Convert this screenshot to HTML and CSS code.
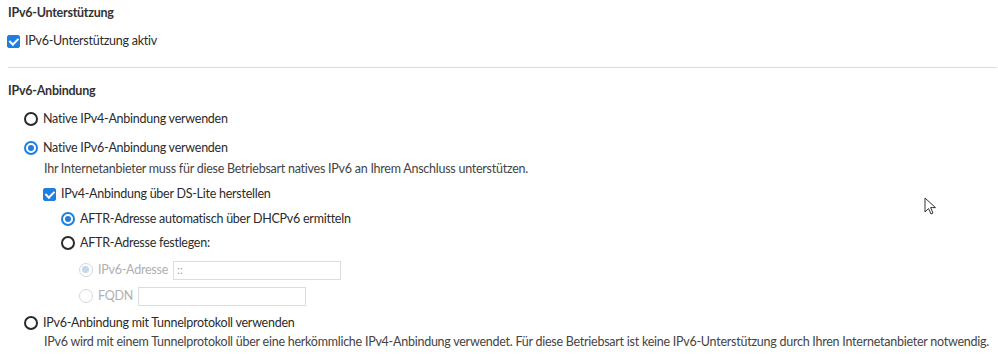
FILE: index.html
```html
<!DOCTYPE html>
<html lang="de">
<head>
<meta charset="utf-8">
<link rel="stylesheet" href="styles.css">
</head>
<body>
<section class="group">
  <h2 class="head h-first">IPv6-Unterstützung</h2>
  <label class="opt m8"><input type="checkbox" class="cb" checked><span>IPv6-Unterstützung aktiv</span></label>
</section>
<hr class="sep">
<section class="group">
  <h2 class="head">IPv6-Anbindung</h2>
  <div class="list">
    <label class="opt rad m8"><input type="radio" name="a"><span>Native IPv4-Anbindung verwenden</span></label>
    <label class="opt rad m9"><input type="radio" name="a" checked><span>Native IPv6-Anbindung verwenden</span></label>
    <div class="sub">
      <p class="desc m2">Ihr Internetanbieter muss für diese Betriebsart natives IPv6 an Ihrem Anschluss unterstützen.</p>
      <label class="opt m6"><input type="checkbox" class="cb" checked><span>IPv4-Anbindung über DS-Lite herstellen</span></label>
      <div class="sub2">
        <label class="opt rad m5"><input type="radio" name="b" checked><span>AFTR-Adresse automatisch über DHCPv6 ermitteln</span></label>
        <label class="opt rad m4"><input type="radio" name="b"><span>AFTR-Adresse festlegen:</span></label>
        <div class="sub3">
          <div class="opt rad dis m7"><input type="radio" name="c" checked disabled><span>IPv6-Adresse</span><input type="text" class="field" value="::" disabled></div>
          <div class="opt rad dis m6"><input type="radio" name="c" disabled><span>FQDN</span><input type="text" class="field" disabled></div>
        </div>
      </div>
    </div>
    <label class="opt rad m7"><input type="radio" name="a"><span>IPv6-Anbindung mit Tunnelprotokoll verwenden</span></label>
    <div class="sub">
      <p class="desc m0">IPv6 wird mit einem Tunnelprotokoll über eine herkömmliche IPv4-Anbindung verwendet. Für diese Betriebsart ist keine IPv6-Unterstützung durch Ihren Internetanbieter notwendig.</p>
    </div>
  </div>
</section>
<svg class="cursor" width="14" height="20" viewBox="0 0 14 20"><path d="M1 1 L1 15 L4.5 11.5 L7 17 L9 16 L6.6 10.6 L11.5 10.6 Z" fill="#fff" stroke="#333" stroke-width="1" stroke-linejoin="round"/></svg>
</body>
</html>
```

FILE: styles.css
```css
html, body {
  margin: 0;
  background: #fff;
}
body {
  padding: 0 1px 0 8px;
  font-family: Lato, "Noto Sans", sans-serif;
  font-size: 12.5px;
  letter-spacing: -0.25px;
  color: #2b2b2b;
  position: relative;
  height: 358px;
  overflow: hidden;
}
.head {
  margin: 0;
  font-size: 12.5px;
  font-weight: 700;
  line-height: 20px;
  color: #333;
}
.h-first { padding-top: 3px; }
.sep {
  margin: 16px 0 0 0;
  border: 0;
  border-top: 1px solid #dcdcdc;
  height: 0;
}
.group + .sep + .group .head { margin-top: 13px; }
.opt {
  display: flex;
  align-items: center;
  height: 20px;
  line-height: 20px;
  gap: 5px;
  margin-left: -1px;
}
.opt.rad { gap: 5px; }
.opt input[type=checkbox], .opt input[type=radio] {
  -webkit-appearance: none;
  appearance: none;
  margin: 0;
  flex: none;
  box-sizing: border-box;
  position: relative;
}
.opt input[type=checkbox] {
  width: 13px;
  height: 13px;
  border-radius: 2px;
  border: 1.5px solid #555;
  background: #fff;
}
.opt input[type=checkbox]:checked {
  background: #1f7fe0;
  border-color: #1f7fe0;
}
.opt input[type=checkbox]:checked::after {
  content: "";
  position: absolute;
  left: 3.2px;
  top: 0.2px;
  width: 3.5px;
  height: 7px;
  border: solid #fff;
  border-width: 0 2px 2px 0;
  transform: rotate(45deg);
}
.opt input[type=radio] {
  width: 14px;
  height: 14px;
  border-radius: 50%;
  border: 2px solid #2a2a2a;
  background: #fff;
}
.opt input[type=radio]:checked {
  border-color: #1f7fe0;
}
.opt input[type=radio]:checked::after {
  content: "";
  position: absolute;
  left: 2px;
  top: 2px;
  width: 6px;
  height: 6px;
  border-radius: 50%;
  background: #1f7fe0;
}
.opt input[type=radio]:disabled {
  border: 1.5px solid #d6d6d6;
}
.opt input[type=radio]:disabled:checked::after {
  left: 2.25px;
  top: 2.25px;
  width: 6.5px;
  height: 6.5px;
  background: #c4d9ef;
}
.list { padding-left: 17px; }
.sub { padding-left: 19px; }
.sub2 { padding-left: 18px; }
.sub3 { padding-left: 18px; }
.desc {
  margin: 0;
  line-height: 18px;
  color: #444;
}
.dis { color: #b0b0b0; }
.field {
  margin-left: 0;
  width: 168px;
  height: 19px;
  box-sizing: border-box;
  border: 1px solid #ddd;
  background: #fff;
  font: inherit;
  font-size: 12px;
  color: #aaa;
  padding: 0 3px;
}
.m0 { margin-top: 0; }
.m2 { margin-top: 2px; }
.m4 { margin-top: 4px; }
.m5 { margin-top: 5px; }
.m6 { margin-top: 6px; }
.m7 { margin-top: 7px; }
.m8 { margin-top: 8px; }
.m9 { margin-top: 9px; }
.cursor {
  position: absolute;
  left: 924px;
  top: 197px;
}
```
